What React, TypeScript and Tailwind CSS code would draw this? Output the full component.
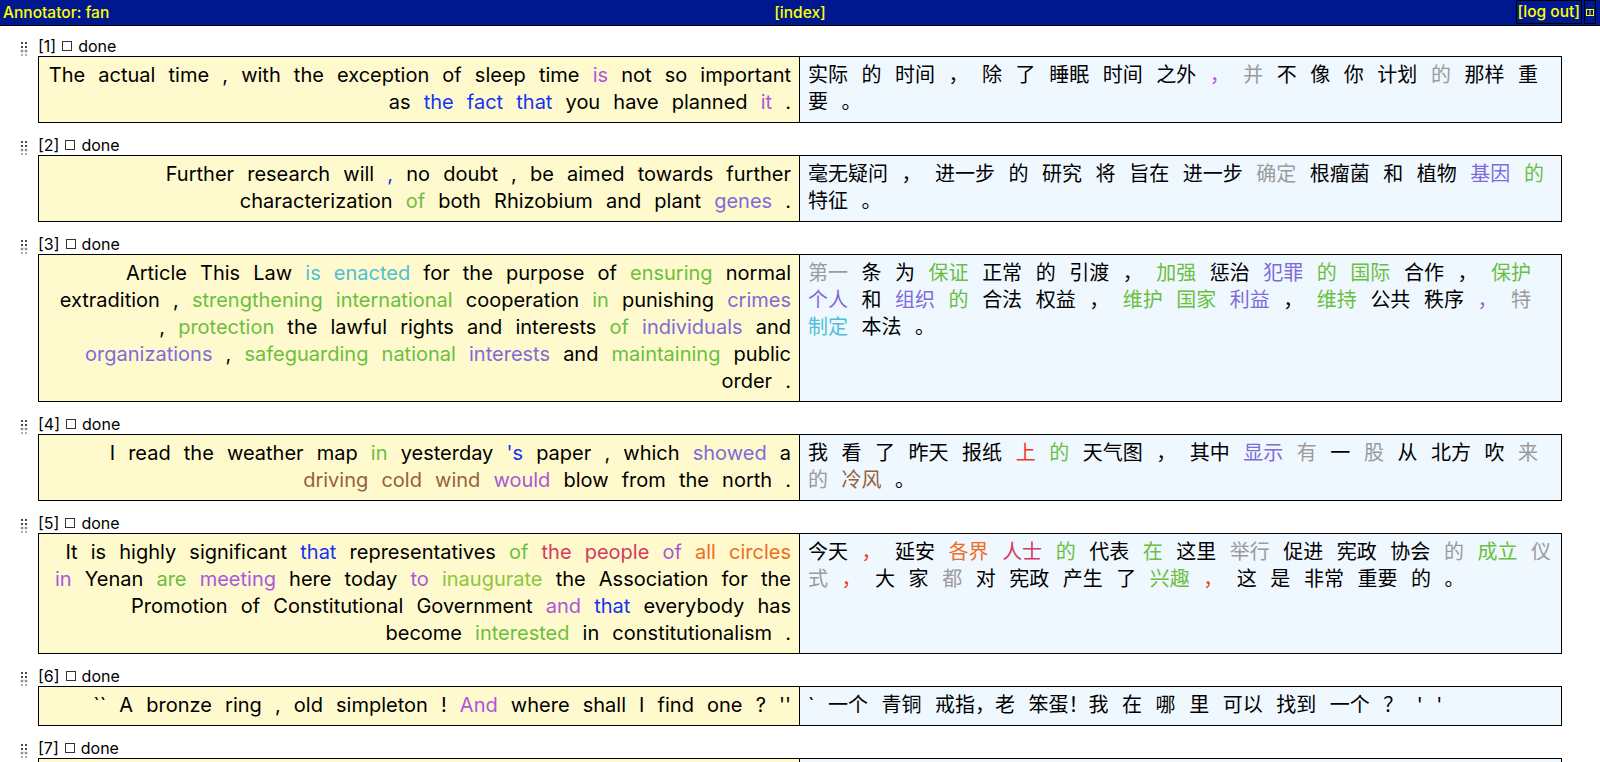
import React from "react";

const C: Record<string, string> = {
  k: "text-black",
  p: "text-[#a957dc]",
  s: "text-[#7e6bd9]",
  b: "text-[#1433f5]",
  g: "text-[#6abf3f]",
  l: "text-[#8cc63f]",
  c: "text-[#4fbfd6]",
  y: "text-[#9b9b9b]",
  r: "text-[#f0391c]",
  m: "text-[#d33a62]",
  o: "text-[#ee6d22]",
  w: "text-[#93613a]",
};

type Seg = [string, string];

const rows: { left: Seg[]; right: Seg[] }[] = [
  {
    left: [
      ["k", "The actual time , with the exception of sleep time"],
      ["p", "is"],
      ["k", "not so important as"],
      ["b", "the fact that"],
      ["k", "you have planned"],
      ["p", "it"],
      ["k", "."],
    ],
    right: [
      ["k", "实际 的 时间 ， 除 了 睡眠 时间 之外"],
      ["p", "，"],
      ["y", "并"],
      ["k", "不 像 你 计划"],
      ["y", "的"],
      ["k", "那样 重要 。"],
    ],
  },
  {
    left: [
      ["k", "Further research will"],
      ["b", ","],
      ["k", "no doubt , be aimed towards further characterization"],
      ["g", "of"],
      ["k", "both Rhizobium and plant"],
      ["s", "genes"],
      ["k", "."],
    ],
    right: [
      ["k", "毫无疑问 ， 进一步 的 研究 将 旨在 进一步"],
      ["y", "确定"],
      ["k", "根瘤菌 和 植物"],
      ["s", "基因"],
      ["g", "的"],
      ["k", "特征 。"],
    ],
  },
  {
    left: [
      ["k", "Article This Law"],
      ["c", "is enacted"],
      ["k", "for the purpose of"],
      ["g", "ensuring"],
      ["k", "normal extradition ,"],
      ["g", "strengthening international"],
      ["k", "cooperation"],
      ["g", "in"],
      ["k", "punishing"],
      ["s", "crimes"],
      ["k", ","],
      ["g", "protection"],
      ["k", "the lawful rights and interests"],
      ["g", "of"],
      ["s", "individuals"],
      ["k", "and"],
      ["s", "organizations"],
      ["k", ","],
      ["g", "safeguarding national"],
      ["s", "interests"],
      ["k", "and"],
      ["g", "maintaining"],
      ["k", "public order ."],
    ],
    right: [
      ["y", "第一"],
      ["k", "条 为"],
      ["g", "保证"],
      ["k", "正常 的 引渡 ，"],
      ["g", "加强"],
      ["k", "惩治"],
      ["s", "犯罪"],
      ["g", "的 国际"],
      ["k", "合作 ，"],
      ["g", "保护"],
      ["s", "个人"],
      ["k", "和"],
      ["s", "组织"],
      ["g", "的"],
      ["k", "合法 权益 ，"],
      ["g", "维护 国家"],
      ["s", "利益"],
      ["k", "，"],
      ["g", "维持"],
      ["k", "公共 秩序"],
      ["p", "，"],
      ["y", "特"],
      ["c", "制定"],
      ["k", "本法 。"],
    ],
  },
  {
    left: [
      ["k", "I read the weather map"],
      ["g", "in"],
      ["k", "yesterday"],
      ["b", "'s"],
      ["k", "paper , which"],
      ["s", "showed"],
      ["k", "a"],
      ["w", "driving cold wind"],
      ["p", "would"],
      ["k", "blow from the north ."],
    ],
    right: [
      ["k", "我 看 了 昨天 报纸"],
      ["r", "上"],
      ["g", "的"],
      ["k", "天气图 ， 其中"],
      ["s", "显示"],
      ["y", "有"],
      ["k", "一"],
      ["y", "股"],
      ["k", "从 北方 吹"],
      ["y", "来 的"],
      ["w", "冷风"],
      ["k", "。"],
    ],
  },
  {
    left: [
      ["k", "It is highly significant"],
      ["b", "that"],
      ["k", "representatives"],
      ["g", "of"],
      ["m", "the people"],
      ["p", "of"],
      ["o", "all circles"],
      ["p", "in"],
      ["k", "Yenan"],
      ["g", "are"],
      ["p", "meeting"],
      ["k", "here today"],
      ["p", "to"],
      ["l", "inaugurate"],
      ["k", "the Association for the Promotion of Constitutional Government"],
      ["p", "and"],
      ["b", "that"],
      ["k", "everybody has become"],
      ["g", "interested"],
      ["k", "in constitutionalism ."],
    ],
    right: [
      ["k", "今天"],
      ["r", "，"],
      ["k", "延安"],
      ["o", "各界"],
      ["m", "人士"],
      ["g", "的"],
      ["k", "代表"],
      ["g", "在"],
      ["k", "这里"],
      ["y", "举行"],
      ["k", "促进 宪政 协会"],
      ["y", "的"],
      ["g", "成立"],
      ["y", "仪式"],
      ["r", "，"],
      ["k", "大 家"],
      ["y", "都"],
      ["k", "对 宪政 产生 了"],
      ["g", "兴趣"],
      ["r", "，"],
      ["k", "这 是 非常 重要 的 。"],
    ],
  },
  {
    left: [
      ["k", "`` A bronze ring , old simpleton !"],
      ["p", "And"],
      ["k", "where shall I find one ? ''"],
    ],
    right: [["k", "` 一个 青铜 戒指，老 笨蛋！我 在 哪 里 可以 找到 一个 ？ ' '"]],
  },
  {
    left: [
      ["k", "He said that the meeting would be held"],
      ["g", "in"],
      ["k", "the afternoon ."],
    ],
    right: [["k", "他 说 会议 将 在 下午 举行 。"]],
  },
];

function Segs({ segs }: { segs: Seg[] }) {
  return (
    <>
      {segs.map((s, i) => (
        <React.Fragment key={i}>
          {i > 0 ? " " : null}
          <span className={C[s[0]]}>{s[1]}</span>
        </React.Fragment>
      ))}
    </>
  );
}

function Handle() {
  return (
    <svg width="8" height="16" viewBox="0 0 8 16" className="block">
      <circle cx="2" cy="2" r="1.1" fill="#222" />
      <circle cx="6" cy="2" r="1.1" fill="#222" />
      <circle cx="2" cy="6" r="1.1" fill="#222" />
      <circle cx="6" cy="6" r="1.1" fill="#222" />
      <circle cx="2" cy="10" r="1" fill="none" stroke="#444" strokeWidth="0.7" />
      <circle cx="6" cy="10" r="1" fill="none" stroke="#444" strokeWidth="0.7" />
      <circle cx="2" cy="14" r="1.1" fill="#999" />
      <circle cx="6" cy="14" r="1.1" fill="#999" />
    </svg>
  );
}

export default function App() {
  return (
    <div className="h-screen overflow-hidden bg-white font-['Inter','Noto_Sans_CJK_SC',sans-serif]">
      <div className="grid h-[26px] grid-cols-3 items-center border-b border-black bg-[#00188f] text-[15.5px] font-medium leading-[18px] text-[#ffff00]">
        <div className="pl-[3px]">Annotator: fan</div>
        <div className="text-center">[index]</div>
        <div className="flex h-full items-start justify-end gap-[2px] pr-[4px]">
          <span className="h-[24px] border border-black px-[1px] leading-[22px]">[log out]</span>
          <span className="flex h-[24px] w-[12px] items-center justify-center border border-black">
            <svg width="8" height="7" viewBox="0 0 8 7">
              <rect x="0.5" y="0.5" width="7" height="6" fill="none" stroke="#ffff00" strokeWidth="1" />
              <line x1="4" y1="0.5" x2="4" y2="6.5" stroke="#ffff00" strokeWidth="1" />
            </svg>
          </span>
        </div>
      </div>
      <div className="flex flex-col gap-[12px] pl-[20px] pr-[38px] pt-[10px]">
        {rows.map((row, i) => (
          <div key={i} className="flex flex-col">
            <div className="flex h-[20px] items-center text-[16px] text-black">
              <span className="mt-[6px] w-[18px]">
                <Handle />
              </span>
              <span>[{i + 1}]</span>
              <span className="ml-[6px] mr-[6px] inline-block h-[10px] w-[10px] border border-[#333]" />
              <span>done</span>
            </div>
            <div className="ml-[18px] grid grid-cols-2 border border-black text-[20px] leading-[27px]">
              <div className="border-r border-black bg-[#fffacd] px-[8px] pb-[6px] pt-[5px] text-right [word-spacing:7.5px]">
                <Segs segs={row.left} />
              </div>
              <div className="bg-[#f0f8ff] px-[8px] pb-[6px] pt-[5px] text-left [word-spacing:7.9px]">
                <Segs segs={row.right} />
              </div>
            </div>
          </div>
        ))}
      </div>
    </div>
  );
}
